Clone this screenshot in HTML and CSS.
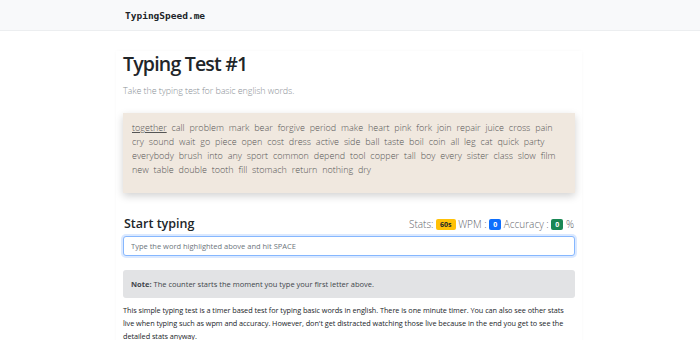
FILE: index.html
```html
<!DOCTYPE html>
<html lang="en">
<head>
	<meta charset="UTF-8">
	<title>TypingSpeed.me</title>
	<link rel="stylesheet" href="styles.css">
</head>
<body>
	<nav class="navbar">
		<div class="navbar-inner">
			<a class="brand" href="#">TypingSpeed.me</a>
		</div>
	</nav>
	<main class="container">
		<h1 class="title">Typing Test #1</h1>
		<p class="lead">Take the typing test for basic english words.</p>

		<div class="words">
			<span class="word current">together</span>
			<span class="word">call</span>
			<span class="word">problem</span>
			<span class="word">mark</span>
			<span class="word">bear</span>
			<span class="word">forgive</span>
			<span class="word">period</span>
			<span class="word">make</span>
			<span class="word">heart</span>
			<span class="word">pink</span>
			<span class="word">fork</span>
			<span class="word">join</span>
			<span class="word">repair</span>
			<span class="word">juice</span>
			<span class="word">cross</span>
			<span class="word">pain</span>
			<span class="word">cry</span>
			<span class="word">sound</span>
			<span class="word">wait</span>
			<span class="word">go</span>
			<span class="word">piece</span>
			<span class="word">open</span>
			<span class="word">cost</span>
			<span class="word">dress</span>
			<span class="word">active</span>
			<span class="word">side</span>
			<span class="word">ball</span>
			<span class="word">taste</span>
			<span class="word">boil</span>
			<span class="word">coin</span>
			<span class="word">all</span>
			<span class="word">leg</span>
			<span class="word">cat</span>
			<span class="word">quick</span>
			<span class="word">party</span>
			<span class="word">everybody</span>
			<span class="word">brush</span>
			<span class="word">into</span>
			<span class="word">any</span>
			<span class="word">sport</span>
			<span class="word">common</span>
			<span class="word">depend</span>
			<span class="word">tool</span>
			<span class="word">copper</span>
			<span class="word">tall</span>
			<span class="word">boy</span>
			<span class="word">every</span>
			<span class="word">sister</span>
			<span class="word">class</span>
			<span class="word">slow</span>
			<span class="word">film</span>
			<span class="word">new</span>
			<span class="word">table</span>
			<span class="word">double</span>
			<span class="word">tooth</span>
			<span class="word">fill</span>
			<span class="word">stomach</span>
			<span class="word">return</span>
			<span class="word">nothing</span>
			<span class="word">dry</span>
		</div>

		<div class="typing-head">
			<h2>Start typing</h2>
			<div class="stats">
				Stats: <span class="badge badge-warning">60s</span>
				WPM : <span class="badge badge-primary">0</span>
				Accuracy : <span class="badge badge-success">0</span> %
			</div>
		</div>
		<input class="form-control" type="text" placeholder="Type the word highlighted above and hit SPACE">

		<div class="alert"><b>Note:</b> The counter starts the moment you type your first letter above.</div>

		<p class="about">This simple typing test is a timer based test for typing basic words in english. There is one minute timer. You can also see other stats live when typing such as wpm and accuracy. However, don't get distracted watching those live because in the end you get to see the detailed stats anyway.</p>
	</main>
</body>
</html>
```

FILE: styles.css
```css
* {
	box-sizing: border-box;
}
body {
	margin: 0;
	font-family: "Open Sans", "Noto Sans", sans-serif;
	color: #212529;
	background: #fff;
}
.navbar {
	height: 31px;
	background: #f8f9fa;
	border-bottom: 1px solid #eceef0;
}
.navbar-inner {
	width: 466px;
	margin-left: calc(50% - 234px);
	padding: 0 9px;
	line-height: 27px;
}
.brand {
	font-family: "DejaVu Sans Mono", monospace;
	font-weight: bold;
	font-size: 9.5px;
	color: #212529;
	text-decoration: none;
}
.container {
	width: 466px;
	margin: 20px 0 0 calc(50% - 234px);
	padding: 0 7px;
	box-shadow: 0 0 3px rgba(0, 0, 0, 0.03);
}
.title {
	margin: 0;
	font-size: 19.5px;
	font-weight: 600;
	letter-spacing: -0.8px;
	line-height: 26px;
}
.lead {
	margin: 7px 0 16px;
	font-size: 9px;
	font-weight: 300;
	color: #8a9096;
	letter-spacing: -0.1px;
}
.words {
	background: #f0e8df;
	padding: 8px 12px 16px 9px;
	box-shadow: 0 3px 8px rgba(0, 0, 0, 0.18);
	font-size: 9px;
	font-weight: 300;
	line-height: 14px;
	color: #555;
	word-spacing: 2.5px;
}
.word.current {
	text-decoration: underline;
}
.typing-head {
	display: flex;
	justify-content: space-between;
	align-items: center;
	margin-top: 22px;
	padding: 0 1px;
}
.typing-head h2 {
	margin: 0;
	font-size: 12.5px;
	font-weight: 600;
}
.stats {
	font-size: 10px;
	font-weight: 300;
	color: #5f656b;
}
.badge {
	display: inline-block;
	padding: 2px 4px;
	font-size: 7px;
	font-weight: 700;
	line-height: 1;
	border-radius: 2px;
	color: #fff;
	vertical-align: 1px;
}
.badge-warning {
	background: #ffc107;
	color: #212529;
}
.badge-primary {
	background: #0d6efd;
}
.badge-success {
	background: #198754;
}
.form-control {
	display: block;
	width: 100%;
	height: 20px;
	margin-top: 4px;
	padding: 0 7px;
	font-family: inherit;
	font-size: 7.5px;
	border: 1px solid #86b7fe;
	border-radius: 3px;
	box-shadow: 0 0 0 2px rgba(13, 110, 253, 0.15);
	outline: none;
}
.form-control::placeholder {
	color: #6c757d;
}
.alert {
	margin-top: 14px;
	padding: 9px 8px;
	background: #e2e3e5;
	border-radius: 3px;
	font-size: 7.5px;
	color: #41464b;
}
.about {
	margin: 6px 0 0;
	font-size: 7.3px;
	letter-spacing: -0.05px;
	line-height: 13px;
}
```
